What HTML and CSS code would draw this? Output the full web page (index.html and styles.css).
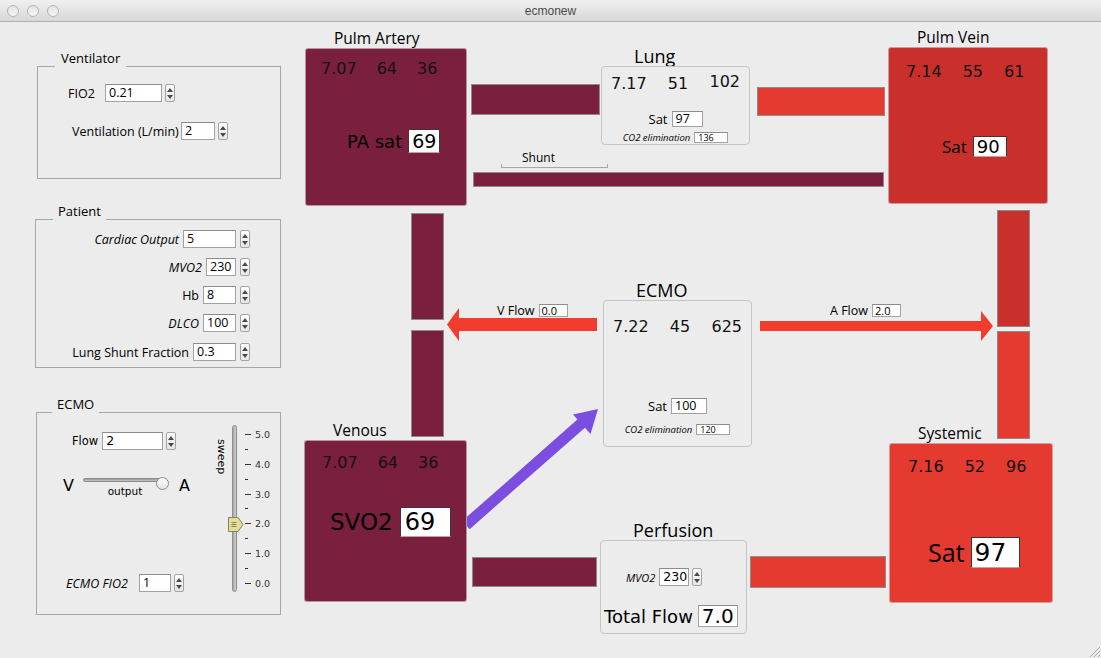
FILE: index.html
```html
<!DOCTYPE html>
<html>
<head>
<meta charset="utf-8">
<title>ecmonew</title>
<link rel="stylesheet" href="styles.css">
</head>
<body>
<div class="window">
  <header class="titlebar">
    <div class="lights"><span class="light"></span><span class="light"></span><span class="light"></span></div>
    <div class="wintitle">ecmonew</div>
  </header>
  <main class="content">
    <aside class="sidebar">
      <section class="panel panel-vent">
        <div class="panel-title">Ventilator</div>
        <div class="panel-box vent-box">
          <div class="field f-fio2"><span class="lbl">FIO2</span><span class="tf w57">0.21</span><span class="spin"><i class="up"></i><i class="dn"></i></span></div>
          <div class="field f-vent"><span class="lbl">Ventilation (L/min)</span><span class="tf w34">2</span><span class="spin"><i class="up"></i><i class="dn"></i></span></div>
        </div>
      </section>

      <section class="panel panel-patient">
        <div class="panel-title">Patient</div>
        <div class="panel-box patient-box">
          <div class="field pfield"><span class="lbl it">Cardiac Output</span><span class="tf w53">5</span><span class="spin"><i class="up"></i><i class="dn"></i></span></div>
          <div class="field pfield"><span class="lbl it">MVO2</span><span class="tf w30">230</span><span class="spin"><i class="up"></i><i class="dn"></i></span></div>
          <div class="field pfield"><span class="lbl">Hb</span><span class="tf w33">8</span><span class="spin"><i class="up"></i><i class="dn"></i></span></div>
          <div class="field pfield"><span class="lbl it">DLCO</span><span class="tf w33">100</span><span class="spin"><i class="up"></i><i class="dn"></i></span></div>
          <div class="field pfield pfield-last"><span class="lbl">Lung Shunt Fraction</span><span class="tf w43">0.3</span><span class="spin"><i class="up"></i><i class="dn"></i></span></div>
        </div>
      </section>

      <section class="panel panel-ecmo">
        <div class="panel-title">ECMO</div>
        <div class="panel-box ecmo-pbox">
          <div class="ecmo-left">
            <div class="field f-flow"><span class="lbl sans">Flow</span><span class="tf w61 sans">2</span><span class="spin"><i class="up"></i><i class="dn"></i></span></div>
            <div class="va-row">
              <span class="va">V</span>
              <div class="hslider">
                <div class="htrack-area"><div class="htrack"></div><div class="hknob"></div></div>
                <div class="hlabel">output</div>
              </div>
              <span class="va">A</span>
            </div>
            <div class="field f-efio2"><span class="lbl it">ECMO FIO2</span><span class="tf w32">1</span><span class="spin"><i class="up"></i><i class="dn"></i></span></div>
          </div>
          <div class="ecmo-right">
            <div class="sweep">sweep</div>
            <div class="vtrack-wrap">
              <div class="vtrack"></div>
              <svg class="vthumb" width="16" height="15" viewBox="0 0 16 15">
                <path d="M0.5 0.5 H10 L15 7.5 L10 14.5 H0.5 Z" fill="#e4dc9c" stroke="#8a8250"/>
                <path d="M3.5 5.5 H8.5 M3.5 7.5 H8.5 M3.5 9.5 H8.5" stroke="#8a8250" stroke-width="1"/>
              </svg>
            </div>
            <div class="scale">
              <div class="tick major"><i></i><span>5.0</span></div>
              <div class="tick"><i></i></div>
              <div class="tick major"><i></i><span>4.0</span></div>
              <div class="tick"><i></i></div>
              <div class="tick major"><i></i><span>3.0</span></div>
              <div class="tick"><i></i></div>
              <div class="tick major"><i></i><span>2.0</span></div>
              <div class="tick"><i></i></div>
              <div class="tick major"><i></i><span>1.0</span></div>
              <div class="tick"><i></i></div>
              <div class="tick major"><i></i><span>0.0</span></div>
            </div>
          </div>
        </div>
      </section>
    </aside>

    <div class="diagram">
      <svg class="arrows" width="811" height="636" viewBox="0 0 811 636">
        <path d="M157 302.5 L169 286 L169 296 L307 296 L307 309 L169 309 L169 319 Z" fill="#f23c2e"/>
        <path d="M470 299 L691 299 L691 289 L703 304 L691 319 L691 309 L470 309 Z" fill="#f23c2e"/>
        <line x1="176" y1="503" x2="293" y2="400" stroke="#7b4ee0" stroke-width="11"/>
        <path d="M308 387 L300.5 412 L283 392.5 Z" fill="#7b4ee0"/>
      </svg>

      <div class="bar maroon bar-pa-lung"></div>
      <div class="bar red bar-lung-pv"></div>
      <div class="bar maroon bar-shunt"></div>
      <div class="bar maroon bar-ven-up"></div>
      <div class="bar maroon bar-ven-down"></div>
      <div class="bar darkred bar-pv-up"></div>
      <div class="bar red bar-pv-down"></div>
      <div class="bar maroon bar-ven-perf"></div>
      <div class="bar red bar-perf-sys"></div>

      <div class="shunt">
        <div class="shunt-text">Shunt</div>
        <div class="shunt-bracket"></div>
      </div>

      <div class="flowtag vflow"><span>V Flow</span><span class="tf small-in">0.0</span></div>
      <div class="flowtag aflow"><span>A Flow</span><span class="tf small-in">2.0</span></div>

      <div class="node node-pa">
        <div class="node-title">Pulm Artery</div>
        <div class="chamber pa">
          <div class="nums"><span>7.07</span><span>64</span><span>36</span></div>
          <div class="satrow"><span class="lbl-lg">PA sat</span><span class="tf sat-in pa-in">69</span></div>
        </div>
      </div>

      <div class="node node-lung">
        <div class="node-title big">Lung</div>
        <div class="gasbox lung">
          <div class="nums spread"><span>7.17</span><span>51</span><span class="raised">102</span></div>
          <div class="minirow lung-sat"><span class="lbl-s">Sat</span><span class="tf w31 h16">97</span></div>
          <div class="minirow co2row"><span class="co2">CO2 elimination</span><span class="tf co2-in">136</span></div>
        </div>
      </div>

      <div class="node node-pv">
        <div class="node-title">Pulm Vein</div>
        <div class="chamber pv">
          <div class="nums"><span>7.14</span><span>55</span><span>61</span></div>
          <div class="satrow"><span class="lbl-c17">Sat</span><span class="tf sat-in pv-in">90</span></div>
        </div>
      </div>

      <div class="node node-ecmo">
        <div class="node-title big">ECMO</div>
        <div class="gasbox ecmo">
          <div class="nums spread"><span>7.22</span><span>45</span><span>625</span></div>
          <div class="minirow ecmo-sat"><span class="lbl-s">Sat</span><span class="tf w36 h16">100</span></div>
          <div class="minirow co2row2"><span class="co2">CO2 elimination</span><span class="tf co2-in">120</span></div>
        </div>
      </div>

      <div class="node node-ven">
        <div class="node-title">Venous</div>
        <div class="chamber venous">
          <div class="nums"><span>7.07</span><span>64</span><span>36</span></div>
          <div class="satrow"><span class="lbl-xl">SVO2</span><span class="tf sat-in ven-in">69</span></div>
        </div>
      </div>

      <div class="node node-perf">
        <div class="node-title big">Perfusion</div>
        <div class="gasbox perf">
          <div class="minirow perf-mvo2"><span class="lbl-i11">MVO2</span><span class="tf w30 sans">230</span><span class="spin"><i class="up"></i><i class="dn"></i></span></div>
          <div class="minirow perf-total"><span class="lbl-tf">Total Flow</span><span class="tf total-in">7.0</span></div>
        </div>
      </div>

      <div class="node node-sys">
        <div class="node-title">Systemic</div>
        <div class="chamber systemic">
          <div class="nums"><span>7.16</span><span>52</span><span>96</span></div>
          <div class="satrow"><span class="lbl-c25">Sat</span><span class="tf sat-in sys-in">97</span></div>
        </div>
      </div>
    </div>
  </main>
  <svg class="grip" width="14" height="14" viewBox="0 0 14 14">
    <path d="M3 13 L13 3 M7 13 L13 7 M11 13 L13 11" stroke="#a8a8a8" stroke-width="1"/>
  </svg>
</div>
</body>
</html>
```

FILE: styles.css
```css
* { box-sizing: border-box; }

html, body {
  margin: 0;
  padding: 0;
  background: #ececec;
}

body {
  width: 1101px;
  height: 658px;
  overflow: hidden;
  font-family: "Open Sans", "DejaVu Sans", sans-serif;
  color: #000;
}

.window {
  width: 1101px;
  height: 658px;
  display: flex;
  flex-direction: column;
  background: #ececec;
  position: relative;
}

/* ---------- title bar ---------- */
.titlebar {
  height: 22px;
  flex: none;
  border-bottom: 1px solid #b0b0b0;
  background: linear-gradient(#f0f0f0, #d8d8d8);
  display: flex;
  align-items: center;
}
.lights {
  display: flex;
  gap: 8px;
  padding-left: 7px;
}
.light {
  width: 12px;
  height: 12px;
  border-radius: 50%;
  border: 1px solid #b2b2b2;
  background: linear-gradient(#e4e4e4, #f5f5f5);
}
.wintitle {
  flex: 1;
  text-align: center;
  margin-right: 59px;
  font: 12px "Liberation Sans", sans-serif;
  color: #4a4a4a;
}

.content {
  flex: 1;
  display: flex;
}

/* ---------- sidebar ---------- */
.sidebar {
  width: 290px;
  flex: none;
  padding-left: 35px;
}
.panel {
  display: flex;
  flex-direction: column;
  align-items: flex-start;
}
.panel-title {
  position: relative;
  z-index: 1;
  height: 17px;
  line-height: 17px;
  background: #ececec;
  font-size: 13px;
  margin-bottom: -1px;
}
.panel-box {
  border: 1px solid #a6a6a6;
  width: 100%;
}
.panel-vent { margin-top: 28px; margin-left: 2px; width: 244px; }
.panel-vent .panel-title { margin-left: 18px; padding: 0 6px; }
.vent-box { height: 113px; }

.panel-patient { margin-top: 24px; width: 246px; }
.panel-patient .panel-title { margin-left: 18px; padding: 0 5px; }
.patient-box {
  height: 149px;
  display: flex;
  flex-direction: column;
  align-items: flex-end;
  padding: 10px 30px 0 0;
  gap: 10px;
}
.pfield-last { margin-top: 1px; }

.panel-ecmo { margin-top: 28px; margin-left: 1px; width: 245px; }
.panel-ecmo .panel-title { margin-left: 16px; padding: 0 5px; }
.ecmo-pbox {
  height: 203px;
  display: flex;
}

.field {
  display: flex;
  align-items: center;
  height: 18px;
}
.field .lbl {
  font-size: 12.5px;
  margin-right: 4px;
  white-space: nowrap;
}
.field .tf { margin-right: 3px; }
.pfield .tf { margin-right: 4px; }
.it { font-style: italic; }
.sans { font-family: "DejaVu Sans", sans-serif; }
.field .lbl.sans { font-size: 11.5px; }

.f-fio2 { margin-top: 17px; margin-left: 30px; }
.f-fio2 .lbl { width: 37px; margin-right: 0; }
.f-vent { margin-top: 20px; margin-left: 34px; }
.f-vent .lbl { width: 109px; margin-right: 0; }

/* text field */
.tf {
  display: flex;
  align-items: center;
  height: 18px;
  background: #fff;
  border: 1px solid #a2a2a2;
  border-top-color: #8c8c8c;
  padding-left: 3px;
  font-size: 12.5px;
  line-height: 1;
  white-space: nowrap;
  overflow: hidden;
}
.w30 { width: 30px; }
.w31 { width: 31px; }
.w32 { width: 32px; }
.w33 { width: 33px; }
.w34 { width: 34px; }
.w36 { width: 36px; }
.w43 { width: 43px; }
.w53 { width: 53px; }
.w57 { width: 57px; }
.w61 { width: 61px; }
.h16 { height: 16px; }

/* spinner */
.spin {
  width: 10px;
  height: 18px;
  flex: none;
  border: 1px solid #a3a3a3;
  border-radius: 2px;
  background: linear-gradient(#fdfdfd, #e6e6e6);
  display: flex;
  flex-direction: column;
  align-items: center;
  justify-content: center;
  gap: 3px;
}
.spin i {
  display: block;
  width: 0;
  height: 0;
  border-left: 3px solid transparent;
  border-right: 3px solid transparent;
}
.spin .up { border-bottom: 4px solid #4a4a4a; }
.spin .dn { border-top: 4px solid #4a4a4a; }

/* ECMO panel */
.ecmo-left {
  width: 178px;
  display: flex;
  flex-direction: column;
  align-items: flex-start;
}
.f-flow { margin-top: 19px; margin-left: 35px; }
.f-efio2 { margin-top: 77px; margin-left: 29px; }
.f-efio2 .lbl { width: 73px; margin-right: 0; }

.va-row {
  margin-top: 24px;
  margin-left: 26px;
  display: flex;
  align-items: center;
}
.va {
  font: 16px "DejaVu Sans", sans-serif;
  line-height: 18px;
}
.hslider {
  width: 86px;
  margin: 0 10px 0 9px;
  display: flex;
  flex-direction: column;
}
.htrack-area {
  height: 12px;
  position: relative;
  display: flex;
  align-items: center;
}
.htrack {
  width: 80px;
  height: 4px;
  border-radius: 2px;
  background: linear-gradient(#9a9a9a, #c8c8c8);
  border: 1px solid #8a8a8a;
}
.hknob {
  position: absolute;
  left: 73px;
  top: 3px;
  width: 13px;
  height: 13px;
  border-radius: 50%;
  border: 1px solid #8a8a8a;
  background: linear-gradient(#ffffff, #e2e2e2);
}
.hlabel {
  font: 10.5px "DejaVu Sans", sans-serif;
  line-height: 11px;
  text-align: center;
  padding-right: 2px;
}

.ecmo-right {
  display: flex;
  align-items: flex-start;
}
.sweep {
  writing-mode: vertical-rl;
  font: 11px "DejaVu Sans", sans-serif;
  margin-top: 26px;
  width: 13px;
  line-height: 13px;
}
.vtrack-wrap {
  position: relative;
  width: 16px;
  height: 167px;
  margin-top: 12px;
}
.vtrack {
  width: 5px;
  height: 100%;
  margin-left: 4px;
  border-radius: 3px;
  border: 1px solid #8e8e8e;
  background: linear-gradient(90deg, #a8a8a8, #d0d0d0);
}
.vthumb {
  position: absolute;
  left: 0;
  top: 92px;
}
.scale {
  margin-top: 14px;
  margin-left: 1px;
  display: flex;
  flex-direction: column;
}
.tick {
  height: 14.9px;
  display: flex;
  align-items: center;
  font: 9.5px "DejaVu Sans", sans-serif;
  color: #333;
}
.tick i {
  display: block;
  width: 3px;
  height: 1px;
  background: #333;
}
.tick.major i { width: 6px; }
.tick span { margin-left: 4px; }

/* ---------- diagram ---------- */
.diagram {
  position: relative;
  flex: 1;
  height: 636px;
}
.arrows {
  position: absolute;
  left: 0;
  top: 0;
}

.bar {
  position: absolute;
  border: 1px solid #8c8c8c;
}
.maroon { background: #7b1f3f; }
.red { background: #e43a2f; }
.darkred { background: #c9302c; }

.bar-pa-lung { left: 181px; top: 62px; width: 129px; height: 31px; }
.bar-lung-pv { left: 467px; top: 65px; width: 128px; height: 29px; }
.bar-shunt { left: 183px; top: 150px; width: 411px; height: 15px; }
.bar-ven-up { left: 121px; top: 191px; width: 33px; height: 107px; }
.bar-ven-down { left: 121px; top: 308px; width: 33px; height: 107px; }
.bar-pv-up { left: 707px; top: 188px; width: 33px; height: 117px; }
.bar-pv-down { left: 707px; top: 309px; width: 33px; height: 108px; }
.bar-ven-perf { left: 182px; top: 535px; width: 125px; height: 30px; }
.bar-perf-sys { left: 460px; top: 534px; width: 136px; height: 32px; }

.shunt {
  position: absolute;
  left: 211px;
  top: 130px;
  width: 107px;
}
.shunt-text {
  font-size: 12px;
  line-height: 12px;
  padding-left: 21px;
}
.shunt-bracket {
  height: 4px;
  border: 1px solid #a8a8a8;
  border-top: none;
}

.flowtag {
  position: absolute;
  display: flex;
  align-items: center;
  gap: 4px;
  font-size: 12.5px;
}
.vflow { left: 207px; top: 280px; }
.aflow { left: 540px; top: 280px; }
.small-in {
  width: 29px;
  height: 13px;
  font-size: 11px;
  padding-left: 2px;
}

.node {
  position: absolute;
  display: flex;
  flex-direction: column;
}
.node-title {
  height: 20px;
  line-height: 20px;
  font-size: 15.5px;
  padding-left: 29px;
  white-space: nowrap;
}
.node-title.big {
  font-size: 18px;
  padding-left: 33px;
}
.node-pa { left: 15px; top: 6px; }
.node-lung { left: 311px; top: 24px; }
.node-pv { left: 598px; top: 5px; }
.node-ecmo { left: 313px; top: 258px; }
.node-ven { left: 14px; top: 398px; }
.node-perf { left: 310px; top: 498px; }
.node-sys { left: 599px; top: 401px; }

.chamber {
  border: 1px solid rgba(210, 200, 200, 0.7);
  border-radius: 3px;
  display: flex;
  flex-direction: column;
  align-items: flex-start;
}
.nums {
  display: flex;
  gap: 20px;
  font: 16px/20px "DejaVu Sans", sans-serif;
  color: #111;
}
.raised { position: relative; top: -2px; }
.satrow {
  display: flex;
  align-items: center;
  gap: 6px;
}
.sat-in {
  border: 1px solid #4a3030;
  border-bottom-color: #c9a0a0;
  font-family: "DejaVu Sans", sans-serif;
  padding-left: 4px;
}

.pa { width: 162px; height: 158px; background: #7b1f3f; padding: 10px 0 0 15px; }
.pa .satrow { margin-top: 50px; margin-left: 26px; }
.lbl-lg { font: 18px "DejaVu Sans", sans-serif; }
.pa-in { width: 32px; height: 24px; font-size: 19px; padding-left: 3px; }

.pv { width: 160px; height: 157px; background: #c9302c; padding: 14px 0 0 17px; }
.pv .nums { gap: 21px; }
.pv .satrow { margin-top: 53px; margin-left: 36px; }
.lbl-c17 { font-size: 17px; }
.pv-in { width: 34px; height: 21px; font-size: 18px; padding-left: 3px; }

.venous { width: 163px; height: 162px; background: #7b1f3f; padding: 12px 0 0 17px; }
.venous .satrow { margin-top: 34px; margin-left: 8px; gap: 7px; }
.lbl-xl { font: 23px "DejaVu Sans", sans-serif; }
.ven-in { width: 51px; height: 30px; font-size: 24px; }

.systemic { width: 164px; height: 160px; background: #e43a2f; padding: 13px 0 0 18px; }
.systemic .nums { gap: 21px; }
.systemic .satrow { margin-top: 58px; margin-left: 20px; }
.lbl-c25 { font-size: 25px; }
.sys-in { width: 49px; height: 31px; font-size: 25px; padding-left: 3px; }

.gasbox {
  border: 1px solid #c4c4c4;
  border-radius: 4px;
  background: #ececec;
  display: flex;
  flex-direction: column;
  align-items: center;
}
.nums.spread {
  align-self: stretch;
  justify-content: space-between;
  padding: 0 9px;
  gap: 0;
}
.minirow {
  display: flex;
  align-items: center;
  gap: 4px;
}
.lbl-s { font-size: 13px; }
.minirow .tf { font-size: 12.5px; line-height: 14px; }
.co2 {
  font-size: 9.5px;
  font-style: italic;
}
.minirow .co2-in {
  width: 34px;
  height: 11px;
  font-size: 9px;
  line-height: 9px;
}

.lung { width: 149px; height: 79px; padding-top: 7px; }
.lung-sat { margin-top: 16px; }
.co2row { margin-top: 3px; }

.ecmo { width: 149px; height: 147px; padding-top: 16px; }
.ecmo-sat { margin-top: 60px; }
.co2row2 { margin-top: 8px; }

.perf { width: 147px; height: 94px; align-items: flex-start; }
.perf-mvo2 { margin-top: 27px; margin-left: 25px; }
.perf-mvo2 .tf { margin-right: -1px; }
.lbl-i11 { font-size: 11px; font-style: italic; }
.perf-total { margin-top: 19px; margin-left: 3px; gap: 5px; }
.lbl-tf { font: 18px "DejaVu Sans", sans-serif; }
.minirow .total-in { width: 40px; height: 22px; font: 20px/22px "DejaVu Sans", sans-serif; padding-left: 3px; }

.grip {
  position: absolute;
  right: 0;
  bottom: 0;
}
```
